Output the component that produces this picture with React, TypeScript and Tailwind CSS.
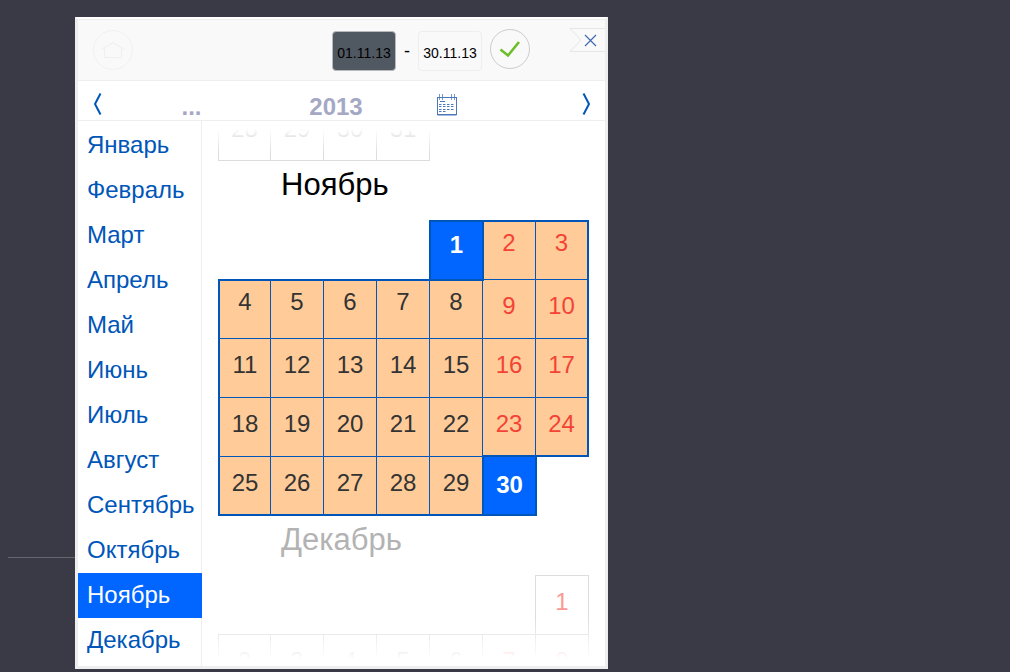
import React, { useState } from "react";

const MONTHS = [
  "Январь", "Февраль", "Март", "Апрель", "Май", "Июнь",
  "Июль", "Август", "Сентябрь", "Октябрь", "Ноябрь", "Декабрь",
];

const NOVEMBER: (number | null)[][] = [
  [null, null, null, null, 1, 2, 3],
  [4, 5, 6, 7, 8, 9, 10],
  [11, 12, 13, 14, 15, 16, 17],
  [18, 19, 20, 21, 22, 23, 24],
  [25, 26, 27, 28, 29, 30, null],
];

function rangeCell(day: number, row: number, col: number) {
  if (day === 1) {
    return "relative z-10 -mx-px -mb-0.5 border-2 bg-[#0066ff] pt-[7px] font-bold text-white";
  }
  if (day === 30) {
    return "relative z-10 -m-px border-2 bg-[#0066ff] pt-3 font-bold text-white";
  }
  const top = row === 0 || (row === 1 && col < 5) ? "border-t-2 pt-[5px]" : "border-t pt-[10px]";
  const left = col === 0 ? "border-l-2" : "";
  const right = col === 6 ? "border-r-2" : "border-r";
  const bottom = row === 4 || (row === 3 && col > 4) ? "-mb-px border-b-2" : "";
  const color = col > 4 ? "text-[#f44336]" : "text-[#333333]";
  return `${top} ${left} ${right} ${bottom} ${color} bg-[#ffcc99]`;
}

function RangeMonth() {
  return (
    <table className="block w-full">
      <tbody className="block">
        {NOVEMBER.map((week, row) => (
          <tr key={row} className="grid h-[59px] grid-cols-7">
            {week.map((day, col) =>
              day === null ? (
                <td key={col} />
              ) : (
                <td key={col} className={`border-[#0056b8] ${rangeCell(day, row, col)}`}>
                  <button type="button" className="block w-full text-center text-2xl leading-8">
                    {day}
                  </button>
                </td>
              ),
            )}
          </tr>
        ))}
      </tbody>
    </table>
  );
}

function PlainWeek({ days, last = false }: { days: (number | null)[]; last?: boolean }) {
  return (
    <table className="block w-full">
      <tbody className="block">
        <tr className="grid h-[59px] grid-cols-7">
          {days.map((day, col) =>
            day === null ? (
              <td key={col} />
            ) : (
              <td
                key={col}
                className={`-ml-px border-x border-t border-[#dddddd] pt-[10px] first:ml-0 ${col > 4 ? "text-[#f99a93]" : "text-[#b3b3b3]"} ${last ? "border-b" : ""}`}
              >
                <button type="button" className="block w-full text-center text-2xl leading-8">
                  {day}
                </button>
              </td>
            ),
          )}
        </tr>
      </tbody>
    </table>
  );
}

function MonthTitle({ name, muted = false }: { name: string; muted?: boolean }) {
  return (
    <h2
      className={`pl-[63px] text-[31px] leading-[48px] ${muted ? "h-[60px] pt-px text-[#b3b3b3]" : "h-[59px] text-black"}`}
    >
      {name}
    </h2>
  );
}

function HomeIcon() {
  return (
    <svg width="24" height="18" viewBox="0 0 24 18" fill="none" stroke="currentColor" strokeWidth="1">
      <path d="M.5 8.5 12 1.5l11.5 7M3.5 7v9.5h17V7" />
    </svg>
  );
}

function CheckIcon() {
  return (
    <svg width="22" height="18" viewBox="0 0 22 18" fill="none" stroke="#6cbf2a" strokeWidth="2.6">
      <path d="M1.500 9.500 9 15.500 20 2" />
    </svg>
  );
}

function Chevron({ next = false }: { next?: boolean }) {
  return (
    <svg width="9" height="22" viewBox="0 0 9 22" fill="none" stroke="#0056b8" strokeWidth="2">
      <path d={next ? "M1.5 .5 7 11 1.5 21.5" : "M7.5 .5 2 11l5.500 10.500"} />
    </svg>
  );
}

function CalendarIcon() {
  return (
    <svg width="22" height="22" viewBox="0 0 22 22" fill="none" stroke="#4a78b8" strokeWidth="1">
      <path d="M1 3.5h20M1.5 3v18h19V3M1 20.5h20" />
      <path d="M3.5 0v6M6.5 0v6M15.5 0v6M18.5 0v6" opacity=".75" />
      <path d="M4 7.500h5" />
      <path d="M3 10.500h16M3 12.500h16M3 15.500h16M3 17.500h7" strokeDasharray="2.500 1.500" />
    </svg>
  );
}

export default function App() {
  const [from, setFrom] = useState("01.11.13");
  const [to, setTo] = useState("30.11.13");
  const [month, setMonth] = useState(10);

  return (
    <div className="flex min-h-screen items-start bg-[#393a45] font-['Liberation_Sans',Arial,sans-serif]">
      <div className="w-[75px] shrink-0 pt-[557px] pl-2">
        <hr className="border-[#66676c]" />
      </div>
      <main className="mt-[17px] w-full max-w-[533px] border-3 border-t-2 border-[#eeeeee] border-t-white bg-white">
        <header className="flex h-[62px] items-center border-y border-[#eeeeee] bg-[#f9f9f9] pl-[15px]">
          <button
            type="button"
            aria-label="Домой"
            className="flex size-10 items-center justify-center rounded-full border border-[#f1f1f1] text-[#efefef]"
          >
            <HomeIcon />
          </button>
          <div className="mr-[39px] ml-auto flex gap-2 text-sm text-black">
            <div className="flex items-center gap-2 pt-0.5">
              <input
                aria-label="Начало периода"
                value={from}
                onChange={(e) => setFrom(e.target.value)}
                className="h-10 w-16 rounded-sm border border-[#b8babd] bg-[#505862] pt-1 text-center"
              />
              <span className="w-[6px] text-center text-lg leading-5">-</span>
              <input
                aria-label="Конец периода"
                value={to}
                onChange={(e) => setTo(e.target.value)}
                className="h-10 w-16 rounded-sm border border-[#eeeeee] pt-1 text-center"
              />
            </div>
            <button
              type="button"
              aria-label="Применить"
              className="flex size-10 items-center justify-center rounded-full border border-[#cccccc]"
            >
              <CheckIcon />
            </button>
          </div>
          <button type="button" aria-label="Закрыть" className="mt-2 self-start">
            <svg width="36" height="25" viewBox="0 0 36 25" fill="none">
              <path d="M36 .5H1L12 12 1 23.500h35" stroke="#e6e6e6" />
              <path d="m16 7 11 11M27 7 16 18" stroke="#3f68b5" strokeWidth="1.200" />
            </svg>
          </button>
        </header>

        <nav className="grid h-10 grid-cols-[39px_149fr_140fr_81fr_80fr_38px] items-center justify-items-center border-b border-[#eeeeee] pt-1 text-2xl font-bold text-[#a5a8c4]">
          <button type="button" aria-label="Предыдущий год">
            <Chevron />
          </button>
          <button type="button" aria-label="Другие годы" className="pt-1.5">...</button>
          <span className="pt-1.5">2013</span>
          <button type="button" aria-label="Календарь" className="pt-0.5">
            <CalendarIcon />
          </button>
          <span />
          <button type="button" aria-label="Следующий год">
            <Chevron next />
          </button>
        </nav>

        <div className="flex">
          <ul className="w-[124px] shrink-0 border-r border-[#eeeeee] pt-0.5 pb-[3px]">
            {MONTHS.map((name, i) => (
              <li key={name}>
                <button
                  type="button"
                  onClick={() => setMonth(i)}
                  className={`-mr-px block h-[45px] w-[124px] pb-0.5 pl-[9px] text-left text-2xl ${i === month ? "bg-[#0066ff] text-white" : "text-[#0056b8]"}`}
                >
                  {name}
                </button>
              </li>
            ))}
          </ul>

          <section className="relative min-w-0 flex-1 px-4">
            <div className="flex h-10 items-end overflow-hidden">
              <PlainWeek days={[28, 29, 30, 31, null, null, null]} last />
            </div>
            <MonthTitle name="Ноябрь" />
            <RangeMonth />
            <MonthTitle name="Декабрь" muted />
            <PlainWeek days={[null, null, null, null, null, null, 1]} />
            <div className="h-[31px] overflow-hidden">
              <PlainWeek days={[2, 3, 4, 5, 6, 7, 8]} />
            </div>
            <div className="pointer-events-none absolute inset-x-0 top-0 h-8 bg-linear-to-b from-white from-25% to-white/0" />
            <div className="pointer-events-none absolute inset-x-0 bottom-0 h-12 bg-linear-to-t from-white from-15% to-white/0" />
          </section>
        </div>
      </main>
    </div>
  );
}
